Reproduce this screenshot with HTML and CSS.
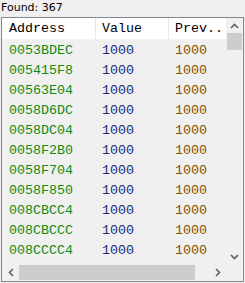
FILE: index.html
```html
<!DOCTYPE html>
<html lang="en">
<head>
    <meta charset="UTF-8">
    <title>Found list</title>
    <link rel="stylesheet" href="styles.css">
</head>
<body>
    <div class="found">Found: 367</div>
    <div class="frame">
        <div class="list">
            <div class="row head">
                <span class="col c1">Address</span>
                <span class="col c2">Value</span>
                <span class="col c3">Prev..</span>
            </div>
            <div class="row"><span class="col c1 addr">0053BDEC</span><span class="col c2 val">1000</span><span class="col c3 prev">1000</span></div>
            <div class="row"><span class="col c1 addr">005415F8</span><span class="col c2 val">1000</span><span class="col c3 prev">1000</span></div>
            <div class="row"><span class="col c1 addr">00563E04</span><span class="col c2 val">1000</span><span class="col c3 prev">1000</span></div>
            <div class="row"><span class="col c1 addr">0058D6DC</span><span class="col c2 val">1000</span><span class="col c3 prev">1000</span></div>
            <div class="row"><span class="col c1 addr">0058DC04</span><span class="col c2 val">1000</span><span class="col c3 prev">1000</span></div>
            <div class="row"><span class="col c1 addr">0058F2B0</span><span class="col c2 val">1000</span><span class="col c3 prev">1000</span></div>
            <div class="row"><span class="col c1 addr">0058F704</span><span class="col c2 val">1000</span><span class="col c3 prev">1000</span></div>
            <div class="row"><span class="col c1 addr">0058F850</span><span class="col c2 val">1000</span><span class="col c3 prev">1000</span></div>
            <div class="row"><span class="col c1 addr">008CBCC4</span><span class="col c2 val">1000</span><span class="col c3 prev">1000</span></div>
            <div class="row"><span class="col c1 addr">008CBCCC</span><span class="col c2 val">1000</span><span class="col c3 prev">1000</span></div>
            <div class="row"><span class="col c1 addr">008CCCC4</span><span class="col c2 val">1000</span><span class="col c3 prev">1000</span></div>
        </div>
        <div class="vscroll">
            <div class="arrow">
                <svg width="9" height="6" viewBox="0 0 9 6"><path d="M1 5 L4.5 1.5 L8 5" fill="none" stroke="#606060" stroke-width="1.6"/></svg>
            </div>
            <div class="vthumb"></div>
            <div class="vtrack"></div>
            <div class="arrow">
                <svg width="9" height="6" viewBox="0 0 9 6"><path d="M1 1 L4.5 4.5 L8 1" fill="none" stroke="#606060" stroke-width="1.6"/></svg>
            </div>
        </div>
        <div class="hscroll">
            <div class="harrow">
                <svg width="6" height="9" viewBox="0 0 6 9"><path d="M5 1 L1.5 4.5 L5 8" fill="none" stroke="#606060" stroke-width="1.6"/></svg>
            </div>
            <div class="hthumb"></div>
            <div class="htrack"></div>
            <div class="harrow">
                <svg width="6" height="9" viewBox="0 0 6 9"><path d="M1 1 L4.5 4.5 L1 8" fill="none" stroke="#606060" stroke-width="1.6"/></svg>
            </div>
        </div>
        <div class="corner"></div>
    </div>
</body>
</html>
```

FILE: styles.css
```css
* {
    padding: 0;
    margin: 0;
    box-sizing: border-box;
}

body {
    width: 245px;
    height: 283px;
    background: #f0f0f0;
    font-family: 'DejaVu Sans', 'Liberation Sans', sans-serif;
    overflow: hidden;
}

.found {
    height: 17px;
    padding: 1px 0 0 1px;
    font-size: 11px;
    line-height: 13px;
    color: #000;
}

.frame {
    margin-left: 1px;
    width: 243px;
    height: 265px;
    border: 1px solid #828790;
    display: grid;
    grid-template-columns: 224px 17px;
    grid-template-rows: 246px 17px;
    background: #f0f0f0;
}

.list {
    overflow: hidden;
    font-family: 'Liberation Mono', 'Courier New', monospace;
    font-size: 13.33px;
}

.row {
    display: flex;
    height: 20px;
    align-items: center;
    white-space: nowrap;
}

.row.head {
    height: 22px;
    background: #fff;
    border-bottom: 1px solid #f2f4f8;
    color: #000;
}

.col {
    padding-left: 7px;
    flex-shrink: 0;
}

.c1 {
    width: 94px;
}

.c2 {
    width: 73px;
}

.c3 {
    width: 60px;
}

.head .c1,
.head .c2 {
    border-right: 1px solid #e5e5e5;
    height: 100%;
    line-height: 21px;
}

.head .c2,
.head .c3 {
    padding-left: 6px;
}

.addr {
    color: #108a10;
}

.val {
    color: #1c2a78;
}

.prev {
    color: #8a5200;
    padding-left: 6px;
}

.val {
    padding-left: 6px;
}

.vscroll {
    display: flex;
    flex-direction: column;
    background: #f0f0f0;
}

.arrow {
    height: 15px;
    display: flex;
    align-items: center;
    justify-content: center;
}

.vthumb {
    margin: 0 1px;
    height: 17px;
    background: #cdcdcd;
}

.vtrack {
    flex: 1;
}

.hscroll {
    display: flex;
    align-items: stretch;
    background: #f0f0f0;
}

.harrow {
    width: 17px;
    display: flex;
    align-items: center;
    justify-content: center;
}

.hthumb {
    margin: 1px 0;
    width: 176px;
    background: #cdcdcd;
}

.htrack {
    flex: 1;
}

.corner {
    background: #f0f0f0;
}
```
